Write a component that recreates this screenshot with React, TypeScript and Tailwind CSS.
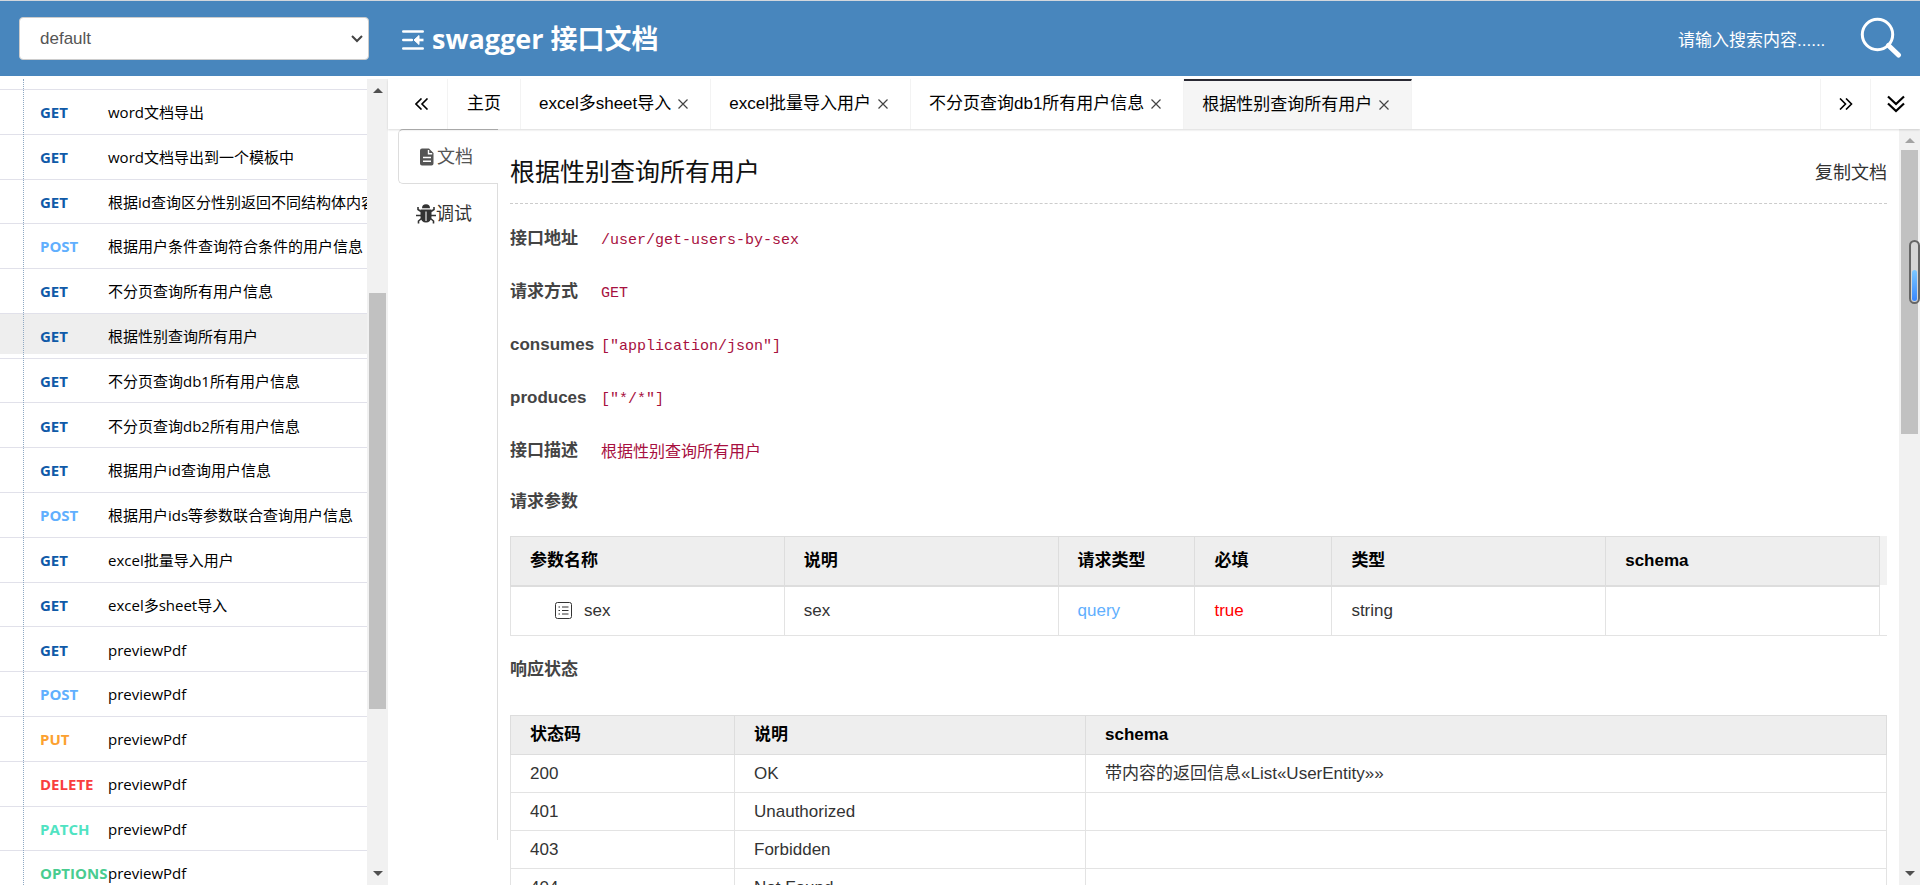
import clsx from 'clsx';

const apis = [
  { method: 'GET', name: 'word文档导出' },
  { method: 'GET', name: 'word文档导出到一个模板中' },
  { method: 'GET', name: '根据id查询区分性别返回不同结构体内容' },
  { method: 'POST', name: '根据用户条件查询符合条件的用户信息' },
  { method: 'GET', name: '不分页查询所有用户信息' },
  { method: 'GET', name: '根据性别查询所有用户', active: true },
  { method: 'GET', name: '不分页查询db1所有用户信息' },
  { method: 'GET', name: '不分页查询db2所有用户信息' },
  { method: 'GET', name: '根据用户id查询用户信息' },
  { method: 'POST', name: '根据用户ids等参数联合查询用户信息' },
  { method: 'GET', name: 'excel批量导入用户' },
  { method: 'GET', name: 'excel多sheet导入' },
  { method: 'GET', name: 'previewPdf' },
  { method: 'POST', name: 'previewPdf' },
  { method: 'PUT', name: 'previewPdf' },
  { method: 'DELETE', name: 'previewPdf' },
  { method: 'PATCH', name: 'previewPdf' },
  { method: 'OPTIONS', name: 'previewPdf' },
];

const methodColors: Record<string, string> = {
  GET: 'text-[#0f5aa8]',
  POST: 'text-[#61affe]',
  PUT: 'text-[#fca130]',
  DELETE: 'text-[#f93e3e]',
  PATCH: 'text-[#50e3c2]',
  OPTIONS: 'text-[#49cc90]',
};

const tabs = ['excel多sheet导入', 'excel批量导入用户', '不分页查询db1所有用户信息', '根据性别查询所有用户'];

const info = [
  { label: '接口地址', value: '/user/get-users-by-sex' },
  { label: '请求方式', value: 'GET' },
  { label: 'consumes', value: '["application/json"]' },
  { label: 'produces', value: '["*/*"]' },
  { label: '接口描述', value: '根据性别查询所有用户', cjk: true },
];

const statuses = [
  { code: '200', text: 'OK', schema: '带内容的返回信息«List«UserEntity»»' },
  { code: '401', text: 'Unauthorized', schema: '' },
  { code: '403', text: 'Forbidden', schema: '' },
  { code: '404', text: 'Not Found', schema: '' },
];

function Arrow({ down, className }: { down?: boolean; className?: string }) {
  return (
    <svg viewBox="0 0 10 5" className={clsx('h-[5px] w-[10px] shrink-0', className)} fill="currentColor">
      <path d={down ? 'M0 0h10L5 5z' : 'M0 5h10L5 0z'} />
    </svg>
  );
}

function MenuIcon() {
  return (
    <svg viewBox="0 0 22 20" className="h-5 w-[22px]" fill="none" stroke="white" strokeWidth="2.6">
      <path d="M1.300 1.500h19.400M1.300 10h8.500M1.300 18.500h19.400" strokeLinecap="round" />
      <path d="M16 10h5.500" strokeWidth="2.600" />
      <path d="M12 10l5-4.500v9z" fill="white" stroke="white" strokeWidth="1" strokeLinejoin="round" />
    </svg>
  );
}

function DocIcon() {
  return (
    <svg viewBox="0 0 14 18" className="h-[18px] w-[14px]">
      <path d="M2 0.500h7l4.500 4.500v10.500a2 2 0 0 1-2 2H2a2 2 0 0 1-2-2V2.500a2 2 0 0 1 2-2z" fill="#555" />
      <path d="M8.500 2v3.700h3.700M3 9.500h8M3 13.200h8" fill="none" stroke="white" strokeWidth="1.400" />
    </svg>
  );
}

function BugIcon() {
  return (
    <svg viewBox="0 0 20 20" className="h-5 w-5" stroke="#333" fill="#333">
      <path d="M6 4.200a4 4 0 0 1 8 0z" stroke="none" />
      <path d="M4.500 5.500h11v7.500a5.500 5.500 0 0 1-11 0z" stroke="none" />
      <path
        d="M5 7.500 2 5.500V3M15 7.500l3-2V3M5 11.500H0M15 11.500h5M5.500 14.500 2.500 17v2.500M14.500 14.500l3 2.500v2.500"
        fill="none"
        strokeWidth="1.600"
      />
      <path d="M10 7.500V17" stroke="#bbb" strokeWidth="1.600" />
    </svg>
  );
}

function ListIcon() {
  return (
    <svg viewBox="0 0 17 17" className="h-[17px] w-[17px]" fill="none" stroke="#333">
      <rect x="0.500" y="0.500" width="16" height="16" rx="2" />
      <path d="M3.500 5h1.500M7 5h6.500M3.500 8.500h1.500M7 8.500h6.500M3.500 12h1.500M7 12h6.500" />
    </svg>
  );
}

function Header() {
  return (
    <header className="flex h-[76px] shrink-0 items-center border-t border-[#d3d7dc] bg-[#4886bd]">
      <div className="relative ml-[19px] w-[350px]">
        <select
          aria-label="分组"
          className="h-[43px] w-full appearance-none rounded border border-[#ccc] bg-white pl-5 text-[17px] text-[#555]"
        >
          <option>default</option>
        </select>
        <svg
          viewBox="0 0 12 8"
          className="pointer-events-none absolute top-[18px] right-[6px] h-2 w-3"
          fill="none"
          stroke="#444"
          strokeWidth="2"
        >
          <path d="m1 1 5 5 5-5" />
        </svg>
      </div>
      <h1 className="ml-[33px] flex items-center gap-2 pt-[2px] font-['Open_Sans','Noto_Sans_CJK_SC',sans-serif] text-[27px] font-bold text-white">
        <MenuIcon />
        swagger 接口文档
      </h1>
      <input
        aria-label="搜索"
        placeholder="请输入搜索内容......"
        className="ml-auto w-[172px] pt-1 text-[17px] text-white outline-none placeholder:text-white"
      />
      <button aria-label="搜索" className="mr-[18px] ml-[10px] pb-[2px]">
        <svg viewBox="0 0 42 42" className="h-[42px] w-[42px]" fill="none" stroke="white">
          <circle cx="17.500" cy="17.500" r="15.200" strokeWidth="3" />
          <path d="m28.500 28.500 10 9.500" strokeWidth="5" strokeLinecap="round" />
        </svg>
      </button>
    </header>
  );
}

function Sidebar() {
  return (
    <aside className="flex w-[388px] shrink-0">
      <nav className="relative flex min-w-0 flex-1 flex-col overflow-hidden font-['Open_Sans','Noto_Sans_CJK_SC',sans-serif] text-[15px]">
        <div className="h-[11px] shrink-0 border-b border-[#e1e1ea]" />
        <ul className="flex h-full shrink-0 flex-col">
          {apis.map((api, i) => (
            <li key={i} className="flex-1 border-b border-[#e1e1ea]">
              <a
                href="#"
                className={clsx(
                  'flex items-center pl-10 whitespace-nowrap text-black',
                  api.active ? 'h-[calc(100%-4px)] bg-[#eee] pt-[5px]' : 'h-full pt-px',
                )}
              >
                <span className={clsx('w-[68px] shrink-0 font-bold', methodColors[api.method])}>{api.method}</span>
                {api.name}
              </a>
            </li>
          ))}
        </ul>
        <div className="pointer-events-none absolute inset-y-0 left-[23px] border-l border-dotted border-[#8fa9c3]" />
      </nav>
      <div className="flex w-[21px] flex-col items-center bg-[#f1f1f1] py-[9px] text-[#505050]">
        <Arrow />
        <div className="mt-[200px] h-[416px] w-[17px] bg-[#c1c1c1]" />
        <Arrow down className="mt-auto" />
      </div>
    </aside>
  );
}

function TabBar() {
  return (
    <div className="relative z-10 flex h-[50px] shrink-0 bg-white text-[17px] text-black shadow-[0_1px_2px_rgba(0,0,0,0.15)]">
      <button aria-label="向左" className="flex w-[60px] items-center justify-center border-r border-[#f3f3f3] pl-2">
        <svg viewBox="0 0 14 12" className="h-3 w-[14px]" fill="none" stroke="black" strokeWidth="1.600">
          <path d="M6.500 0.500 1 6l5.500 5.500M12.500 0.500 7 6l5.500 5.500" />
        </svg>
      </button>
      <button className="border-r border-[#f3f3f3] px-[19px]">主页</button>
      {tabs.map((tab, i) => (
        <button
          key={tab}
          className={clsx(
            'flex items-center gap-[7px] border-r border-[#f3f3f3] pr-[22px] pl-[18px]',
            i === tabs.length - 1 && 'border-t-2 border-t-[#292933] bg-[#f5f5f5]',
          )}
        >
          {tab}
          <svg viewBox="0 0 10 10" className="h-[10px] w-[10px]" stroke="#444" strokeWidth="1.200">
            <path d="m0.500 0.500 9 9M9.500 0.500l-9 9" />
          </svg>
        </button>
      ))}
      <button aria-label="向右" className="ml-auto flex w-[50px] items-center justify-center border-l border-[#f3f3f3]">
        <svg viewBox="0 0 14 12" className="h-3 w-[14px]" fill="none" stroke="black" strokeWidth="1.600">
          <path d="M1 0.500 6.500 6 1 11.500M7 0.500 12.500 6 7 11.500" />
        </svg>
      </button>
      <button aria-label="更多" className="flex w-[50px] items-center justify-center border-l border-[#f3f3f3]">
        <svg viewBox="0 0 18 18" className="h-[18px] w-[18px]" fill="none" stroke="black" strokeWidth="2.200">
          <path d="m1 1.500 8 7.500 8-7.500M1 8.500 9 16l8-7.500" />
        </svg>
      </button>
    </div>
  );
}

function SideTabs() {
  return (
    <div className="mb-[45px] flex w-[100px] shrink-0 flex-col text-lg">
      <button className="flex h-[55px] items-center gap-[3px] rounded-l-[5px] border border-r-0 border-[#ddd] border-t-[#bbb] pl-[21px] text-[#555]">
        <DocIcon />
        文档
      </button>
      <button className="flex h-[60px] items-center border-r border-[#ddd] pl-[18px] text-[#333]">
        <BugIcon />
        调试
      </button>
      <div className="flex-1 border-r border-[#ddd]" />
    </div>
  );
}

const th = 'border border-[#ddd] bg-[#eee] px-[19px] text-left font-bold text-black';
const td = 'border border-[#e3e3e3] px-[19px]';

function ParamTable() {
  return (
    <div className="mt-[21px] border-b border-[#e3e3e3] bg-[linear-gradient(#f2f2f2_49px,white_49px)] pr-[7px]">
      <table className="-mb-px w-full table-fixed border-collapse bg-white">
        <thead className="border-b-2 border-[#ddd]">
          <tr className="h-[49px]">
            <th className={clsx(th, 'w-[20%]')}>参数名称</th>
            <th className={clsx(th, 'w-[20%]')}>说明</th>
            <th className={clsx(th, 'w-[10%]')}>请求类型</th>
            <th className={clsx(th, 'w-[10%]')}>必填</th>
            <th className={clsx(th, 'w-[20%]')}>类型</th>
            <th className={clsx(th, 'w-[20%]')}>schema</th>
          </tr>
        </thead>
        <tbody>
          <tr className="h-[50px]">
            <td className={td}>
              <div className="flex items-center gap-3 pl-[25px]">
                <ListIcon />
                sex
              </div>
            </td>
            <td className={td}>sex</td>
            <td className={clsx(td, 'text-[#61affe]')}>query</td>
            <td className={clsx(td, 'text-[#f00]')}>true</td>
            <td className={td}>string</td>
            <td className={td} />
          </tr>
        </tbody>
      </table>
    </div>
  );
}

function StatusTable() {
  return (
    <table className="mt-[32px] w-full table-fixed border-collapse">
      <thead>
        <tr className="h-[39px]">
          <th className={clsx(th, 'w-[224px]')}>状态码</th>
          <th className={clsx(th, 'w-[351px]')}>说明</th>
          <th className={th}>schema</th>
        </tr>
      </thead>
      <tbody>
        {statuses.map((s) => (
          <tr key={s.code} className="h-[38px]">
            <td className={td}>{s.code}</td>
            <td className={td}>{s.text}</td>
            <td className={td}>{s.schema}</td>
          </tr>
        ))}
      </tbody>
    </table>
  );
}

function Doc() {
  return (
    <article className="min-w-0 flex-1 overflow-hidden px-3 text-[17px] text-[#333]">
      <div className="flex h-[75px] items-center justify-between border-b border-dashed border-[#ccc] pt-[14px]">
        <h2 className="text-[25px] text-[#111]">根据性别查询所有用户</h2>
        <button className="text-lg">复制文档</button>
      </div>
      <dl className="pt-2">
        {info.map((row) => (
          <div key={row.label} className="flex h-[53px] items-center">
            <dt className="w-[91px] font-bold text-[#444]">{row.label}</dt>
            <dd
              className={clsx(
                "pt-[5px] font-['Liberation_Mono','Noto_Sans_CJK_SC',monospace] text-[#a71040]",
                row.cjk ? 'text-base' : 'text-[15px]',
              )}
            >
              {row.value}
            </dd>
          </div>
        ))}
      </dl>
      <h3 className="mt-[12px] leading-[26px] font-bold text-[#444]">请求参数</h3>
      <ParamTable />
      <h3 className="mt-[21px] leading-[26px] font-bold text-[#444]">响应状态</h3>
      <StatusTable />
    </article>
  );
}

export default function App() {
  return (
    <div className="flex h-screen flex-col overflow-hidden bg-white font-['Liberation_Sans','Noto_Sans_CJK_SC',sans-serif]">
      <Header />
      <div className="flex min-h-0 flex-1 pt-[3px]">
        <Sidebar />
        <main className="flex min-w-0 flex-1 flex-col">
          <TabBar />
          <div className="flex min-h-0 flex-1 pl-[10px]">
            <SideTabs />
            <Doc />
            <div className="relative flex w-[21px] shrink-0 flex-col items-center bg-[#f1f1f1] py-[9px]">
              <Arrow className="text-[#a3a3a3]" />
              <div className="mt-[7px] h-[284px] w-[17px] bg-[#c1c1c1]" />
              <Arrow down className="mt-auto text-[#505050]" />
              <div className="absolute top-[111px] right-0 flex h-16 w-[11px] items-end rounded-full border-2 border-[#666] bg-[#d6d6d6] p-px">
                <div className="h-[31px] w-full rounded-full bg-linear-to-b from-[#7cc8ff] to-[#3a86ff]" />
              </div>
            </div>
          </div>
        </main>
      </div>
    </div>
  );
}
